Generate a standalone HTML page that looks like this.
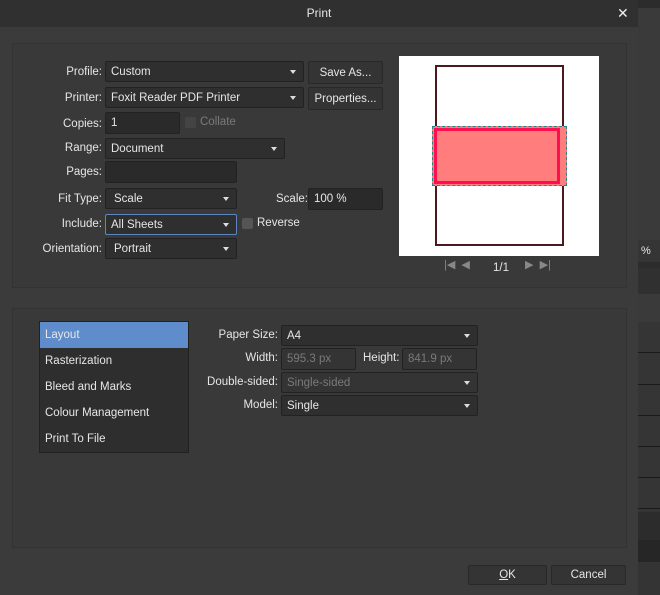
<!DOCTYPE html>
<html><head><style>
*{box-sizing:border-box;margin:0;padding:0}
body{width:660px;height:595px;background:#3b3b3b;font-family:"Liberation Sans",sans-serif;font-size:11.5px;color:#e6e6e6;position:relative;overflow:hidden}
.a{position:absolute}
.title{left:0;top:0;width:638px;height:27px;background:#303030;text-align:center;line-height:26px;font-size:12px}
.panel{background:#393939;border:1px solid #333}
.lbl{text-align:right;width:100px;line-height:21px}
.dd{background:#2f2f2f;border:1px solid #222;border-radius:2px;height:21px;line-height:20px;padding-left:5px}
.dd:after{content:"";position:absolute;right:7px;top:8px;border-left:3.5px solid transparent;border-right:3.5px solid transparent;border-top:4px solid #ddd}
.in{background:#2a2a2a;border:1px solid #222;border-radius:2px;height:22px;line-height:21px;padding-left:5px}
.btn{background:#343434;border:1px solid #282828;border-radius:2px;text-align:center;line-height:22px;height:23px}
.cb{width:11px;height:11px;background:#555;border-radius:2px}
.dis{color:#7a7a7a}
.list div{height:26px;line-height:27px;padding-left:5px}
</style></head><body>
<div class="a title">Print</div>
<div class="a" style="left:617px;top:5px;font-size:14px;color:#eee">✕</div>
<div class="a" style="left:638px;top:0;width:22px;height:595px;background:#2c2c2c"></div>
<div class="a" style="left:638px;top:8px;width:22px;height:232px;background:#3a3a3a"></div>
<div class="a" style="left:638px;top:240px;width:22px;height:22px;background:#353535;line-height:22px;padding-left:3px;font-size:11px">%</div>
<div class="a" style="left:638px;top:268px;width:22px;height:26px;background:#303030"></div>
<div class="a" style="left:638px;top:294px;width:22px;height:28px;background:#3a3a3a"></div>
<div class="a" style="left:638px;top:322px;width:22px;height:190px;background:#353535"></div>
<div class="a" style="left:638px;top:352px;width:22px;height:1px;background:#1a1a1a"></div>
<div class="a" style="left:638px;top:384px;width:22px;height:1px;background:#1a1a1a"></div>
<div class="a" style="left:638px;top:415px;width:22px;height:1px;background:#1a1a1a"></div>
<div class="a" style="left:638px;top:446px;width:22px;height:1px;background:#1a1a1a"></div>
<div class="a" style="left:638px;top:477px;width:22px;height:1px;background:#1a1a1a"></div>
<div class="a" style="left:638px;top:508px;width:22px;height:1px;background:#1a1a1a"></div>
<div class="a" style="left:638px;top:540px;width:22px;height:22px;background:#262626"></div>
<div class="a" style="left:638px;top:562px;width:22px;height:33px;background:#343434"></div>

<div class="a panel" style="left:12px;top:43px;width:615px;height:245px"></div>
<div class="a lbl" style="left:2px;top:62px">Profile:</div>
<div class="a dd" style="left:105px;top:61px;width:199px">Custom</div>
<div class="a btn" style="left:308px;top:61px;width:75px">Save As...</div>
<div class="a lbl" style="left:2px;top:88px">Printer:</div>
<div class="a dd" style="left:105px;top:87px;width:199px">Foxit Reader PDF Printer</div>
<div class="a btn" style="left:308px;top:87px;width:75px">Properties...</div>
<div class="a lbl" style="left:2px;top:114px">Copies:</div>
<div class="a in" style="left:105px;top:112px;width:75px">1</div>
<div class="a cb" style="left:185px;top:117px;background:#444"></div>
<div class="a dis" style="left:200px;top:116px">Collate</div>
<div class="a lbl" style="left:2px;top:138px">Range:</div>
<div class="a dd" style="left:105px;top:138px;width:180px">Document</div>
<div class="a lbl" style="left:2px;top:162px">Pages:</div>
<div class="a in" style="left:105px;top:161px;width:132px"></div>
<div class="a lbl" style="left:2px;top:189px">Fit Type:</div>
<div class="a dd" style="left:105px;top:188px;width:132px;padding-left:8px">Scale</div>
<div class="a" style="left:276px;top:193px">Scale:</div>
<div class="a in" style="left:308px;top:188px;width:75px">100 %</div>
<div class="a lbl" style="left:2px;top:214px">Include:</div>
<div class="a dd" style="left:105px;top:214px;width:132px;border-color:#5b86c0">All Sheets</div>
<div class="a cb" style="left:242px;top:218px"></div>
<div class="a" style="left:257px;top:217px">Reverse</div>
<div class="a lbl" style="left:2px;top:239px">Orientation:</div>
<div class="a dd" style="left:105px;top:238px;width:132px;padding-left:8px">Portrait</div>

<div class="a" style="left:399px;top:56px;width:200px;height:200px;background:#fff"></div>
<div class="a" style="left:435px;top:65px;width:129px;height:181px;border:2px solid #4a1a1e"></div>
<div class="a" style="left:432px;top:126px;width:135px;height:60px;border:1px dashed #1a8a8a;background:#ff7d7d"></div>
<div class="a" style="left:434px;top:128px;width:126px;height:56px;border:3px solid #ff0f50;background:#ff7d7d"></div>
<div class="a" style="left:444px;top:258px;color:#888;font-size:11px">|◀&nbsp;&nbsp;◀</div>
<div class="a" style="left:493px;top:262px">1/1</div>
<div class="a" style="left:525px;top:258px;color:#888;font-size:11px">▶&nbsp;&nbsp;▶|</div>

<div class="a panel" style="left:12px;top:308px;width:615px;height:240px"></div>
<div class="a list" style="left:39px;top:321px;width:150px;height:132px;background:#2e2e2e;border:1px solid #222">
<div style="background:#5f8ccb">Layout</div><div>Rasterization</div><div>Bleed and Marks</div><div>Colour Management</div><div>Print To File</div></div>
<div class="a lbl" style="left:178px;top:325px">Paper Size:</div>
<div class="a dd" style="left:281px;top:325px;width:197px">A4</div>
<div class="a lbl" style="left:178px;top:348px">Width:</div>
<div class="a in dis" style="left:281px;top:348px;width:75px;background:#343434">595.3 px</div>
<div class="a" style="left:363px;top:352px">Height:</div>
<div class="a in dis" style="left:402px;top:348px;width:75px;background:#343434">841.9 px</div>
<div class="a lbl" style="left:178px;top:372px">Double-sided:</div>
<div class="a dd dis" style="left:281px;top:372px;width:197px;background:#343434">Single-sided</div>
<div class="a lbl" style="left:178px;top:395px">Model:</div>
<div class="a dd" style="left:281px;top:395px;width:197px">Single</div>

<div class="a btn" style="left:468px;top:565px;width:79px;height:20px;line-height:19px"><u>O</u>K</div>
<div class="a btn" style="left:551px;top:565px;width:75px;height:20px;line-height:19px">Cancel</div>
</body></html>
